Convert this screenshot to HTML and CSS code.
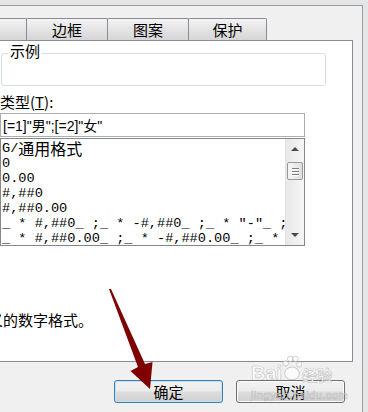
FILE: index.html
```html
<!DOCTYPE html>
<html lang="zh-CN">
<head>
    <meta charset="UTF-8">
    <meta name="viewport" content="width=device-width, initial-scale=1.0">
    <title>单元格格式</title>
    <link rel="stylesheet" href="styles.css">
</head>
<body>

    <div class="dialog">
        <div class="tabs">
            <div class="tab"></div>
            <div class="tab">边框</div>
            <div class="tab">图案</div>
            <div class="tab tab-last">保护</div>
        </div>

        <div class="panel">
            <div class="columns">
                <div class="category-col"></div>
                <div class="format-col">
                    <div class="sample"><span class="sample-title">示例</span></div>
                    <div class="type-label">类型(<u>T</u>):</div>
                    <input class="type-input" type="text" value='[=1]"男";[=2]"女"'>
                    <div class="format-list">
                        <ul class="list-items">
                            <li>G/<span class="cjk">通用格式</span></li>
                            <li>0</li>
                            <li>0.00</li>
                            <li>#,##0</li>
                            <li>#,##0.00</li>
                            <li>_ * #,##0_ ;_ * -#,##0_ ;_ * "-"_ ;_ @_ </li>
                            <li>_ * #,##0.00_ ;_ * -#,##0.00_ ;_ * "-"??_ ;_ @_ </li>
                        </ul>
                        <!-- 滚动条 -->
                        <div class="scrollbar">
                            <div class="sb-btn"><span class="tri-up"></span></div>
                            <div class="thumb"><i></i><i></i><i></i></div>
                            <div class="sb-btn sb-down"><span class="tri-down"></span></div>
                        </div>
                    </div>
                </div>
            </div>
            <p class="hint">以现有格式为基础，生成自定义的数字格式。</p>
        </div>

        <div class="actions">
            <button class="btn btn-default">确定</button>
            <button class="btn">取消</button>
        </div>
    </div>

    <!-- 红色箭头 -->
    <svg class="arrow" viewBox="0 0 368 412">
        <polygon points="109,289 111,289 145,364 152.5,362 150,389 130.5,371 138,367" fill="#7e0000"/>
    </svg>

    <!-- 水印 -->
    <div class="watermark">
        <div class="wm-logo">
            <span class="wm-bai">Bai</span>
            <svg class="wm-paw" viewBox="0 0 22 30">
                <circle cx="4" cy="10" r="3"/>
                <circle cx="9" cy="5" r="3"/>
                <circle cx="15" cy="5" r="3"/>
                <circle cx="19" cy="11" r="3"/>
                <ellipse cx="11" cy="21" rx="8" ry="7"/>
            </svg>
            <span class="wm-jy">经验</span>
        </div>
        <div class="wm-url">jingyan.baidu.com</div>
    </div>

</body>
</html>
```

FILE: styles.css
```css
* {
    box-sizing: border-box;
}
body {
    margin: 0;
    width: 368px;
    height: 412px;
    overflow: hidden;
    position: relative;
    background-color: #e4e5e7;
    font-family: "Noto Sans CJK SC", sans-serif;
    font-size: 15px;
    color: #000;
}
.dialog {
    margin: 5px 0 0 -226px;
    width: 589px;
    height: 407px;
    padding: 12px 9px 0 6px;
    border-top: 1px solid #9c9c9c;
    border-right: 1px solid #9c9c9c;
    background-color: #f0f0f0;
}
.tabs {
    display: flex;
    height: 22px;
    padding-left: 165px;
}
.tab {
    width: 82px;
    border: 1px solid #898c95;
    border-bottom: 0;
    border-radius: 2px 2px 0 0;
    background: linear-gradient(#f4f4f4, #e5e5e5 45%, #d6d6d6);
    text-align: center;
    line-height: 21px;
}
.tab + .tab {
    margin-left: -1px;
}
.tab-last {
    width: 79px;
}
.panel {
    height: 322px;
    padding-left: 11px;
    border: 1px solid #898c95;
    background-color: #fff;
}
.columns {
    display: flex;
    gap: 12px;
    height: 205px;
}
.category-col {
    width: 196px;
}
.format-col {
    width: 326px;
}
.sample {
    margin: 12px 0 0 1px;
    width: 325px;
    height: 33px;
    border: 1px solid #d5dfe5;
    border-radius: 3px;
}
.sample-title {
    display: block;
    width: fit-content;
    margin: -10px 0 0 6px;
    padding: 0 2px;
    background-color: #fff;
    line-height: 14px;
}
.type-label {
    margin-top: 7px;
    line-height: 17px;
}
.type-input {
    display: block;
    margin: 3px 0 0;
    width: 305px;
    height: 24px;
    padding: 0 2px;
    border: 1px solid #abadb3;
    background-color: #fff;
    font: 14px "Liberation Sans", "Noto Sans CJK SC", sans-serif;
    color: #000;
    outline: none;
}
.format-list {
    display: flex;
    margin-top: 1px;
    width: 305px;
    height: 108px;
    border: 1px solid #828790;
}
.list-items {
    flex: 1;
    margin: 0;
    padding: 2px 0 0 1px;
    list-style: none;
    overflow: hidden;
    font: 13.6px/15px "Liberation Mono", "Noto Sans CJK SC", monospace;
}
.list-items li {
    height: 15px;
    white-space: pre;
}
.cjk {
    vertical-align: top;
    font-family: "Noto Sans CJK SC", sans-serif;
    font-size: 16px;
    line-height: 15px;
}
.scrollbar {
    width: 19px;
    display: flex;
    flex-direction: column;
    align-items: center;
    background: linear-gradient(to right, #e8e8e8, #f6f6f6);
    border-left: 1px solid #e2e2e2;
}
.sb-btn {
    width: 100%;
    height: 20px;
    display: flex;
    align-items: center;
    justify-content: center;
}
.sb-down {
    margin-top: auto;
}
.tri-up {
    border-left: 4px solid transparent;
    border-right: 4px solid transparent;
    border-bottom: 4px solid #4a4a4a;
}
.tri-down {
    border-left: 4px solid transparent;
    border-right: 4px solid transparent;
    border-top: 4px solid #4a4a4a;
}
.thumb {
    margin-top: 3px;
    width: 16px;
    height: 18px;
    border: 1px solid #979797;
    border-radius: 2px;
    background: linear-gradient(to right, #f6f6f6, #e0e0e0);
    display: flex;
    flex-direction: column;
    align-items: center;
    justify-content: center;
    gap: 2px;
}
.thumb i {
    width: 7px;
    height: 1px;
    background-color: #7e7e7e;
    box-shadow: 0 1px #fff;
}
.hint {
    margin: 65px 0 0 1px;
    line-height: 18px;
    white-space: nowrap;
}
.actions {
    display: flex;
    justify-content: flex-end;
    gap: 13px;
    margin-top: 18px;
    padding-right: 8px;
}
.btn {
    width: 109px;
    height: 23px;
    padding: 0;
    border: 1px solid #707070;
    border-radius: 3px;
    background: linear-gradient(#f2f2f2, #ebebeb 48%, #dddddd 52%, #cfcfcf);
    box-shadow: inset 0 0 0 1px #fcfcfc;
    font: 15px/21px "Noto Sans CJK SC", sans-serif;
    color: #000;
}
.btn-default {
    border-color: #3c7fb1;
    box-shadow: inset 0 0 0 1px #bfe2f6;
}
.arrow {
    position: absolute;
    left: 0;
    top: 0;
    width: 368px;
    height: 412px;
    pointer-events: none;
}
.watermark {
    position: absolute;
    left: 251px;
    top: 353px;
    color: rgba(255, 255, 255, 0.75);
    -webkit-text-stroke: 0.7px rgba(140, 140, 140, 0.45);
    pointer-events: none;
}
.wm-logo {
    display: flex;
    align-items: flex-end;
    height: 30px;
}
.wm-bai {
    font: bold 20px/20px "Liberation Sans", sans-serif;
}
.wm-paw {
    width: 20px;
    height: 30px;
    fill: rgba(255, 255, 255, 0.7);
    stroke: rgba(140, 140, 140, 0.45);
    stroke-width: 1;
}
.wm-jy {
    font: bold 15px/17px "Noto Sans CJK SC", sans-serif;
}
.wm-url {
    margin-top: 6px;
    font: 11px/12px "Liberation Sans", sans-serif;
    letter-spacing: 0.5px;
}
```
